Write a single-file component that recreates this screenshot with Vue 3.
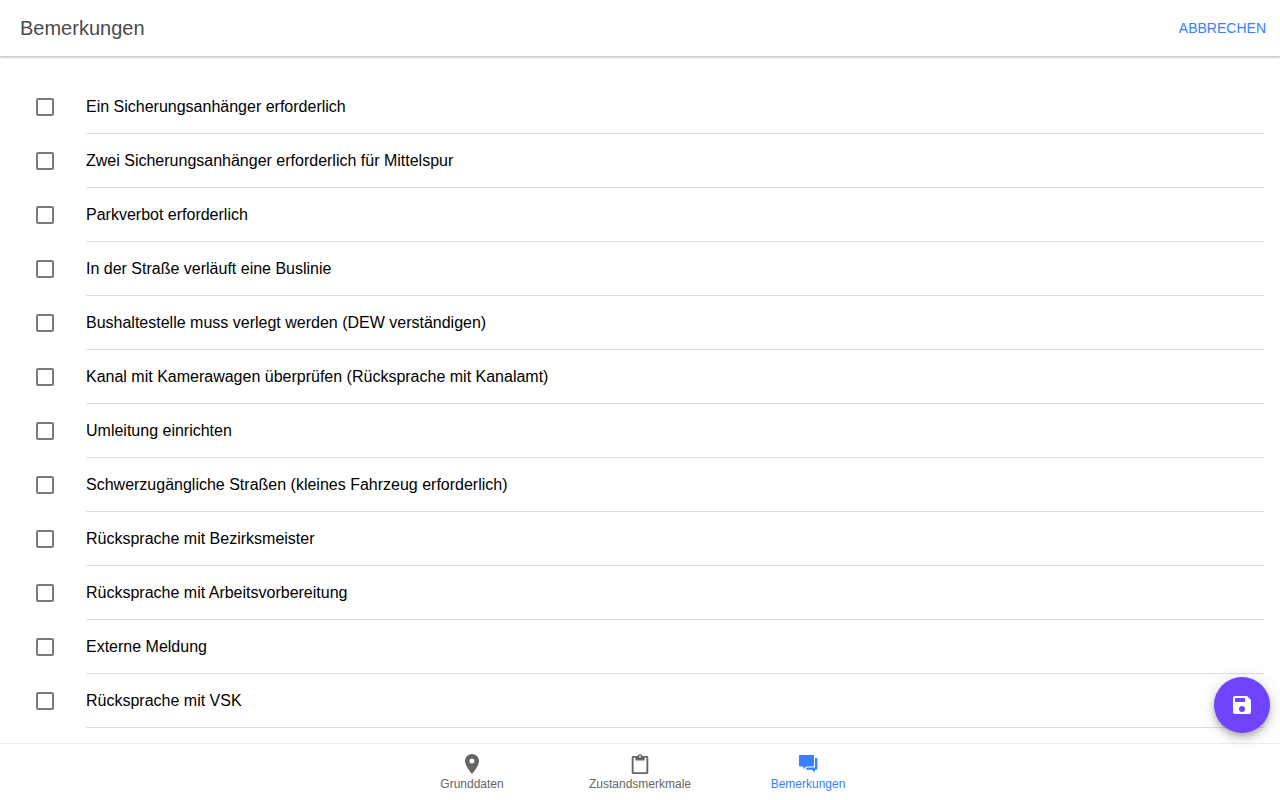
<script setup>
import { ref } from 'vue'

const remarks = ref([
  'Ein Sicherungsanhänger erforderlich',
  'Zwei Sicherungsanhänger erforderlich für Mittelspur',
  'Parkverbot erforderlich',
  'In der Straße verläuft eine Buslinie',
  'Bushaltestelle muss verlegt werden (DEW verständigen)',
  'Kanal mit Kamerawagen überprüfen (Rücksprache mit Kanalamt)',
  'Umleitung einrichten',
  'Schwerzugängliche Straßen (kleines Fahrzeug erforderlich)',
  'Rücksprache mit Bezirksmeister',
  'Rücksprache mit Arbeitsvorbereitung',
  'Externe Meldung',
  'Rücksprache mit VSK',
].map((label) => ({ label, checked: false })))

const tabs = [
  {
    label: 'Grunddaten',
    icon: 'M12 2C8.130 2 5 5.130 5 9c0 5.250 7 13 7 13s7-7.750 7-13c0-3.870-3.130-7-7-7zm0 9.500a2.500 2.500 0 1 1 0-5 2.500 2.500 0 0 1 0 5z',
  },
  {
    label: 'Zustandsmerkmale',
    icon: 'M18.6 4H14.600C14.200 2.900 13.200 2.200 12 2.200S9.800 2.900 9.400 4H5.400C4.500 4 3.700 4.700 3.700 5.600V20.400C3.700 21.300 4.500 22 5.400 22H18.600C19.500 22 20.300 21.300 20.300 20.400V5.600C20.300 4.700 19.500 4 18.600 4zM12 3.600a.9.9 0 1 1 0 1.800.9.9 0 0 1 0-1.800zM18.400 20.200H5.600V5.700H7.400V8.600H16.600V5.700H18.400z',
  },
  {
    label: 'Bemerkungen',
    icon: 'M3.600 3H17.400C17.800 3 18 3.300 18 3.600V13.700C18 14.100 17.800 14.400 17.400 14.400H10.300L7.400 17.200V14.400H3.600C3.200 14.400 3 14.100 3 13.700V3.600C3 3.300 3.200 3 3.600 3zM19 6H20.700C21.100 6 21.300 6.300 21.300 6.600V17.100C21.300 17.500 21.100 17.800 20.700 17.800H19V20.200L15.800 17.800H9.500L11.200 15.400H18.400C18.800 15.400 19 15.200 19 14.800z',
  },
]
const activeTab = ref('Bemerkungen')
</script>

<template>
  <div class="page">
    <header class="toolbar">
      <h1 class="title">Bemerkungen</h1>
      <button type="button" class="cancel">ABBRECHEN</button>
    </header>

    <main class="content">
      <ul class="list">
        <li v-for="(item, i) in remarks" :key="item.label" class="item">
          <input :id="`remark-${i}`" v-model="item.checked" type="checkbox" class="check" />
          <label :for="`remark-${i}`" class="label">{{ item.label }}</label>
        </li>
      </ul>
      <button type="button" class="fab" aria-label="Speichern">
        <svg viewBox="0 0 24 24" width="24" height="24" aria-hidden="true">
          <path fill="currentColor" fill-rule="evenodd" d="M17 3H5a2 2 0 0 0-2 2v14a2 2 0 0 0 2 2h14a2 2 0 0 0 2-2V7l-4-4zm-5 16a3 3 0 1 1 0-6 3 3 0 0 1 0 6zm3-10H5V5h10v4z" />
        </svg>
      </button>
    </main>

    <nav class="tabs">
      <button
        v-for="tab in tabs"
        :key="tab.label"
        type="button"
        class="tab"
        :class="{ active: tab.label === activeTab }"
        @click="activeTab = tab.label"
      >
        <svg viewBox="0 0 24 24" width="24" height="24" aria-hidden="true">
          <path fill="currentColor" fill-rule="evenodd" :d="tab.icon" />
        </svg>
        <span>{{ tab.label }}</span>
      </button>
    </nav>
  </div>
</template>

<style>
body {
  margin: 0;
  background: #fff;
}
</style>

<style scoped>
.page {
  display: flex;
  flex-direction: column;
  height: 100vh;
  font-family: "Liberation Sans", Arial, sans-serif;
  color: #000;
}

button {
  border: 0;
  padding: 0;
  background: none;
  font-family: inherit;
  cursor: pointer;
}

.toolbar {
  display: flex;
  align-items: center;
  justify-content: space-between;
  flex: none;
  min-height: 56px;
  padding: 0 14px 0 20px;
  box-shadow: 0 1px 0 rgba(0, 0, 0, 0.04), 0 2px 2px rgba(0, 0, 0, 0.18);
  z-index: 1;
}

.title {
  margin: 0;
  font-size: 20px;
  font-weight: 400;
  line-height: 24px;
  color: #4a4a4a;
}

.cancel {
  font-size: 14px;
  line-height: 32px;
  color: #3880ff;
}

.content {
  position: relative;
  flex: 1;
  min-height: 0;
}

.list {
  box-sizing: border-box;
  height: 100%;
  margin: 0;
  padding: 24px 16px 0 36px;
  overflow: hidden;
  list-style: none;
}

.item {
  display: flex;
  align-items: center;
  gap: 32px;
}

.check {
  appearance: none;
  flex: none;
  box-sizing: border-box;
  width: 18px;
  height: 18px;
  margin: 0;
  border: 2px solid #7a7a7a;
  border-radius: 2px;
  background: #fff;
}

.check:checked {
  border-color: #3880ff;
  background: #3880ff;
}

.label {
  flex: 1;
  border-bottom: 1px solid #dedede;
  font-size: 16px;
  line-height: 53px;
}

.fab {
  position: absolute;
  right: 10px;
  bottom: 10px;
  display: flex;
  align-items: center;
  justify-content: center;
  width: 56px;
  height: 56px;
  border-radius: 50%;
  background: #7044ff;
  color: #fff;
  box-shadow: 0 3px 5px -1px rgba(0, 0, 0, 0.2), 0 6px 10px rgba(0, 0, 0, 0.14), 0 1px 18px rgba(0, 0, 0, 0.12);
}

.tabs {
  display: flex;
  justify-content: center;
  flex: none;
  height: 56px;
  border-top: 1px solid #ededed;
}

.tab {
  display: flex;
  flex-direction: column;
  align-items: center;
  flex: 0 1 168px;
  padding-top: 8px;
  font-size: 12px;
  line-height: 16px;
  color: #666;
}

.tab.active {
  color: #3880ff;
}
</style>
